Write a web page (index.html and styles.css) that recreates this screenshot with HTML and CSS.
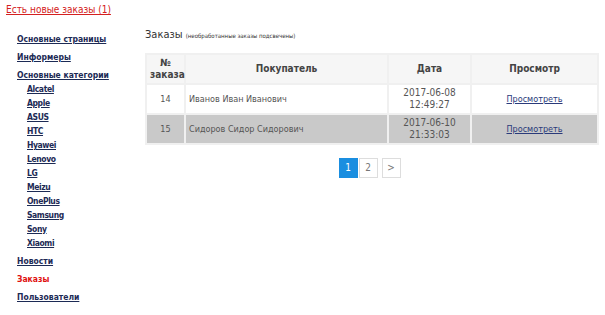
FILE: index.html
```html
<!DOCTYPE html>
<html lang="ru">
<head>
  <meta charset="UTF-8">
  <title>Заказы</title>
  <link rel="stylesheet" href="styles.css">
</head>
<body>
  <div class="notice"><a href="#">Есть новые заказы (1)</a></div>
  <div class="layout">
    <div class="menu">
      <a class="menu-item" href="#">Основные страницы</a>
      <a class="menu-item" href="#">Информеры</a>
      <a class="menu-item" href="#">Основные категории</a>
      <div class="submenu">
        <a href="#">Alcatel</a>
        <a href="#">Apple</a>
        <a href="#">ASUS</a>
        <a href="#">HTC</a>
        <a href="#">Hyawei</a>
        <a href="#">Lenovo</a>
        <a href="#">LG</a>
        <a href="#">Meizu</a>
        <a href="#">OnePlus</a>
        <a href="#">Samsung</a>
        <a href="#">Sony</a>
        <a href="#">Xiaomi</a>
      </div>
      <a class="menu-item" href="#">Новости</a>
      <a class="menu-item active" href="#">Заказы</a>
      <a class="menu-item" href="#">Пользователи</a>
    </div>
    <div class="content">
      <h2 class="title">Заказы <small>(необработанные заказы подсвечены)</small></h2>
      <table class="orders">
        <colgroup>
          <col class="col-num">
          <col class="col-buyer">
          <col class="col-date">
          <col class="col-view">
        </colgroup>
        <tr>
          <th>№<br>заказа</th>
          <th>Покупатель</th>
          <th>Дата</th>
          <th>Просмотр</th>
        </tr>
        <tr>
          <td class="num">14</td>
          <td class="buyer">Иванов Иван Иванович</td>
          <td class="date">2017-06-08<br>12:49:27</td>
          <td><a href="#">Просмотреть</a></td>
        </tr>
        <tr class="new">
          <td class="num">15</td>
          <td class="buyer">Сидоров Сидор Сидорович</td>
          <td class="date">2017-06-10<br>21:33:03</td>
          <td><a href="#">Просмотреть</a></td>
        </tr>
      </table>
      <div class="pager">
        <span class="page current">1</span>
        <a class="page" href="#">2</a>
        <a class="page next" href="#">&gt;</a>
      </div>
    </div>
  </div>
</body>
</html>
```

FILE: styles.css
```css
body {
  margin: 0;
  font-family: "DejaVu Sans Condensed", "DejaVu Sans", sans-serif;
  font-size: 9px;
  color: #444;
  background: #fff;
}
.notice {
  padding: 4px 0 0 6px;
  height: 19px;
  font-size: 10px;
}
.notice a {
  color: #d42020;
}
.layout {
  display: flex;
  padding-top: 5px;
}
.menu {
  width: 128px;
  padding-left: 17px;
  display: flex;
  flex-direction: column;
}
.menu-item {
  display: block;
  align-self: flex-start;
  font-weight: bold;
  font-size: 8.5px;
  color: #1c2a55;
  margin-top: 4px;
  line-height: 14px;
}
.menu-item.active {
  color: #e01010;
  text-decoration: none;
}
.submenu {
  display: flex;
  flex-direction: column;
  align-items: flex-start;
  padding-left: 10px;
}
.submenu a {
  font-weight: bold;
  font-size: 8.5px;
  letter-spacing: -0.4px;
  line-height: 14px;
  color: #1c2a55;
}
.content {
  width: 452px;
}
.title {
  margin: 0;
  font-size: 11px;
  font-weight: normal;
  color: #333;
  height: 25px;
  line-height: 14px;
}
.title small {
  font-size: 6px;
}
.orders {
  width: 452px;
  border-collapse: collapse;
  table-layout: fixed;
}
.col-num {
  width: 39px;
}
.col-buyer {
  width: 203px;
}
.col-date {
  width: 83px;
}
.col-view {
  width: 127px;
}
.orders th,
.orders td {
  border: 2px solid #f0f0f0;
  text-align: center;
  padding: 0 3px;
  height: 28px;
  line-height: 12px;
}
.orders th {
  background: #f6f6f6;
  color: #444;
  font-size: 10px;
}
.orders td {
  color: #555;
  background: #fff;
}
.orders .new td {
  background: #c9c9c9;
}
.orders .buyer {
  text-align: left;
}
.orders .date {
  font-size: 10px;
}
.orders a {
  color: #2a3a7a;
}
.pager {
  display: flex;
  justify-content: center;
  gap: 1px;
  margin-top: 13px;
  padding-right: 3px;
}
.page {
  display: block;
  width: 17px;
  height: 18px;
  line-height: 18px;
  text-align: center;
  border: 1px solid #ddd;
  color: #777;
  text-decoration: none;
  font-size: 10px;
}
.page.current {
  background: #1a8ee0;
  border-color: #1a8ee0;
  color: #fff;
}
.page.next {
  margin-left: 3px;
}
```
